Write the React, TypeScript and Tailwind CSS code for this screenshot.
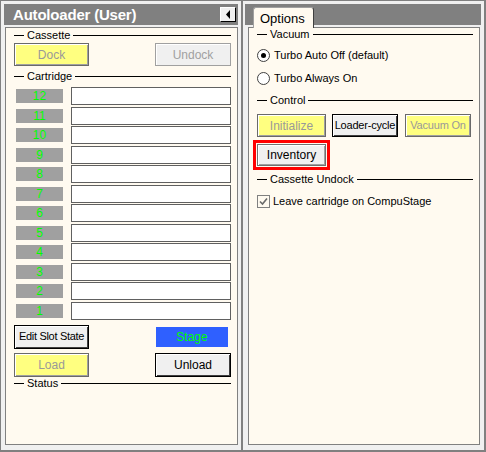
import React from 'react';

const font = { fontFamily: '"Liberation Sans", Arial, sans-serif' };

type Tone = 'yellow' | 'off' | 'strong' | 'plain';

const tones: Record<Tone, string> = {
  yellow:
    'bg-[#ffff80] text-[#999999] border border-[#6a6a6a] shadow-[inset_1px_1px_0_#ffffff,inset_-1px_-1px_0_#a0a0a0]',
  off: 'bg-[#f0f0f0] text-[#a0a0a0] border border-[#a0a0a0] shadow-[inset_1px_1px_0_#ffffff]',
  strong:
    'bg-[#f0f0f0] text-black border border-black shadow-[inset_1px_1px_0_#ffffff,inset_-1px_-1px_0_#404040]',
  plain:
    'bg-[#f0f0f0] text-black border border-[#707070] shadow-[inset_1px_1px_0_#ffffff,inset_-1px_-1px_0_#a0a0a0]',
};

function Btn({ children, tone, className = '' }: { children: React.ReactNode; tone: Tone; className?: string }) {
  return (
    <div className={`flex items-center justify-center whitespace-nowrap leading-none ${tones[tone]} ${className}`}>
      {children}
    </div>
  );
}

function Group({ label, className = '' }: { label: string; className?: string }) {
  return (
    <div className={`flex items-center h-[13px] ${className}`}>
      <div className="w-[10px] h-px bg-black" />
      <span className="px-[3px] text-[11px] leading-none text-black">{label}</span>
      <div className="flex-1 h-px bg-black" />
    </div>
  );
}

function Radio({ checked }: { checked?: boolean }) {
  return (
    <svg width="13" height="13" viewBox="0 0 13 13">
      <circle cx="6.5" cy="6.5" r="6" fill="#fff" stroke="#404040" strokeWidth="1" />
      {checked && <circle cx="6.5" cy="6.5" r="2.5" fill="#000" />}
    </svg>
  );
}

const slots = [12, 11, 10, 9, 8, 7, 6, 5, 4, 3, 2, 1];

export default function App() {
  return (
    <div className="w-[486px] h-[452px] bg-[#f0f0f0] flex" style={font}>
      {/* left panel */}
      <div className="w-[243px] h-full flex flex-col border-l border-t border-r-2 border-b-2 border-[#808080] pt-[3px] px-[3px] pb-[5px]">
        <div className="h-[21px] bg-[#808080] flex items-center pl-[9px] pr-[2px]">
          <span className="text-white font-bold text-[15px] leading-none tracking-[-0.2px]">Autoloader (User)</span>
          <div className="ml-auto w-[16px] h-[15px] bg-[#f0f0f0] border-t border-l border-white border-r border-b border-r-black border-b-black flex items-center justify-center">
            <svg width="5" height="9" viewBox="0 0 5 9">
              <path d="M4 0 L0 4.5 L4 9 Z" fill="#000" />
            </svg>
          </div>
        </div>
        <div className="mt-[2px] ml-[1px] flex-1 border border-[#808080] bg-[#fffaf0] pl-[8px] pr-[6px] flex flex-col">
          <Group label="Cassette" className="mt-[1px]" />
          <div className="mt-[1px] flex">
            <Btn tone="yellow" className="w-[75px] h-[23px] text-[12px]">Dock</Btn>
            <Btn tone="off" className="ml-auto w-[76px] h-[23px] text-[12px]">Undock</Btn>
          </div>
          <Group label="Cartridge" className="mt-[4px]" />
          <div className="mt-[4px] flex flex-col gap-[1.5px]">
            {slots.map((n) => (
              <div key={n} className="flex items-center h-[18px]">
                <div className="ml-[2px] w-[47px] h-[14px] bg-[#a0a0a0] text-[#00ff00] text-[12px] leading-none flex items-center justify-center">
                  {n}
                </div>
                <div className="ml-[8px] flex-1 h-[18px] bg-white border border-[#606060]" />
              </div>
            ))}
          </div>
          <div className="mt-[5px] flex items-center">
            <Btn tone="strong" className="w-[75px] h-[24px] text-[11px] tracking-[-0.3px]">Edit Slot State</Btn>
            <div className="ml-auto mr-[3px] w-[72px] h-[20px] bg-[#2f60ff] text-[#00ff00] text-[12px] leading-none flex items-center justify-center">
              Stage
            </div>
          </div>
          <div className="mt-[4px] flex">
            <Btn tone="yellow" className="w-[75px] h-[24px] text-[12px]">Load</Btn>
            <Btn tone="strong" className="ml-auto w-[76px] h-[24px] text-[12px]">Unload</Btn>
          </div>
          <Group label="Status" />
        </div>
      </div>

      {/* right panel */}
      <div className="w-[243px] h-full flex flex-col border-t border-r-2 border-b-2 border-[#808080] pt-[3px] pl-[2px] pr-[3px] pb-[5px]">
        <div className="h-[21px] bg-[#808080] flex items-end pl-[8px]">
          <div className="relative z-10 -mb-[3px] h-[21px] w-[61px] bg-[#fffaf0] border-l border-t border-[#a0a0a0] border-r border-r-[#404040] rounded-t-[3px] flex items-start pt-[4px] pl-[6px]">
            <span className="text-[13px] leading-none text-black">Options</span>
          </div>
        </div>
        <div className="mt-[2px] ml-[3px] mr-[1px] flex-1 border border-[#808080] bg-[#fffaf0] pl-[8px] pr-[6px] flex flex-col">
          <Group label="Vacuum" />
          <div className="mt-[6px] h-[16px] flex items-center gap-[4px] text-[11px] leading-none">
            <Radio checked />
            <span>Turbo Auto Off (default)</span>
          </div>
          <div className="mt-[7px] h-[16px] flex items-center gap-[4px] text-[11px] leading-none">
            <Radio />
            <span>Turbo Always On</span>
          </div>
          <Group label="Control" className="mt-[8px]" />
          <div className="mt-[7px] flex">
            <Btn tone="yellow" className="w-[69px] h-[23px] text-[12px]">Initialize</Btn>
            <Btn tone="strong" className="ml-[6px] w-[66px] h-[23px] text-[11px] tracking-[-0.2px]">Loader-cycle</Btn>
            <Btn tone="yellow" className="ml-[7px] w-[66px] h-[23px] text-[11px] tracking-[-0.2px]">Vacuum On</Btn>
          </div>
          <div className="mt-[3px] -ml-[4px] w-[77px] h-[30px] border-[3px] border-[#ff0000] p-[1px]">
            <Btn tone="plain" className="w-full h-full text-[12px]">Inventory</Btn>
          </div>
          <Group label="Cassette Undock" className="mt-[3px]" />
          <div className="mt-[7px] h-[16px] flex items-center gap-[3px] text-[11px] leading-none">
            <svg width="13" height="13" viewBox="0 0 13 13">
              <rect x="0.5" y="0.5" width="12" height="12" fill="#fffaf0" stroke="#808080" />
              <path d="M3 6.5 L5.5 9 L10 3.5" fill="none" stroke="#6a6a6a" strokeWidth="1.6" />
            </svg>
            <span>Leave cartridge on CompuStage</span>
          </div>
        </div>
      </div>
    </div>
  );
}
